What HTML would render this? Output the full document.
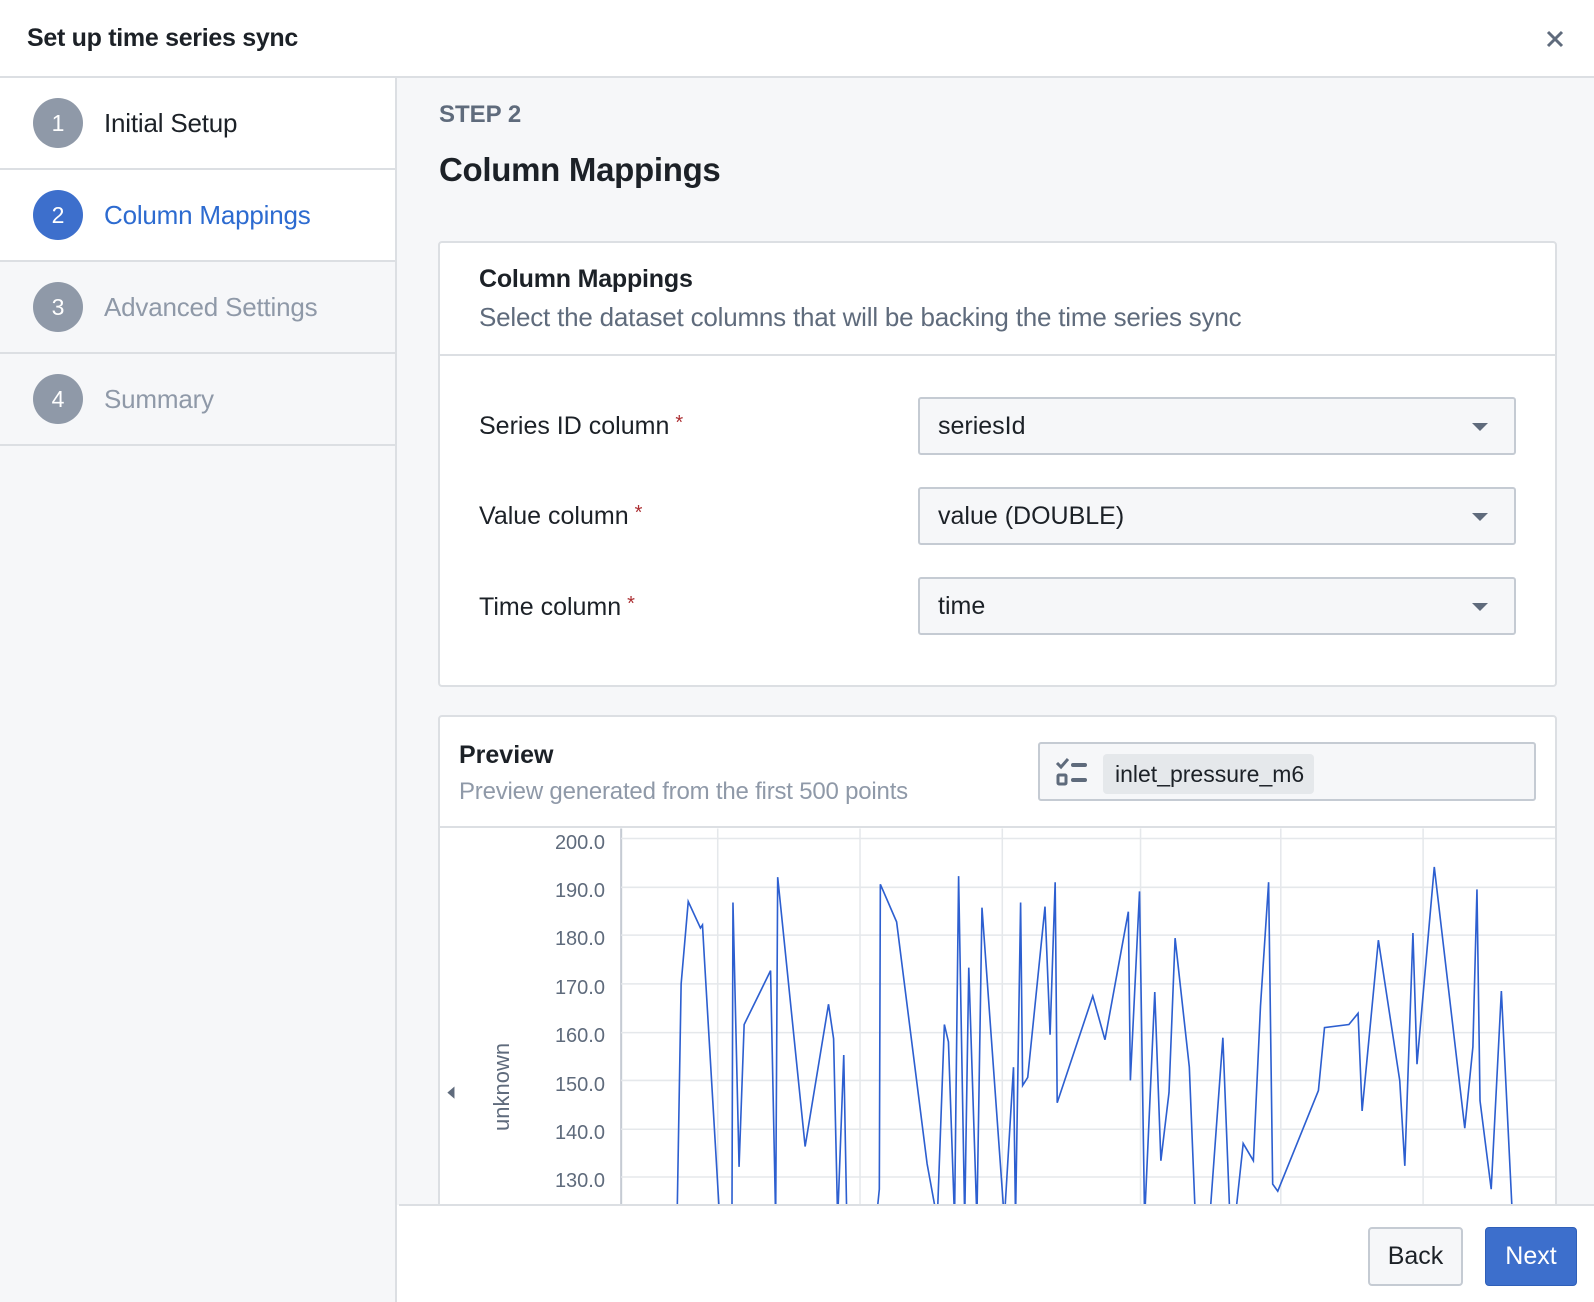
<!DOCTYPE html>
<html><head><meta charset="utf-8"><style>
*{box-sizing:border-box;margin:0;padding:0}
body{width:1594px;height:1302px;overflow:hidden;background:#fff;font-family:"Liberation Sans",sans-serif;color:#1c2127;position:relative}
.abs{position:absolute}
.hdr{left:0;top:0;width:1594px;height:78px;border-bottom:2px solid #dcdfe3;background:#fff}
.side{left:0;top:78px;width:397px;height:1224px;background:#f6f7f9;border-right:2px solid #dcdfe3}
.row{position:absolute;left:0;width:395px;height:92px;border-bottom:2px solid #dcdfe3;display:flex;align-items:center}
.circ{width:50px;height:50px;border-radius:50%;background:#8f99a8;color:#fff;font-size:23px;display:flex;align-items:center;justify-content:center;margin-left:33px;margin-right:21px}
.lbl{font-size:26px;letter-spacing:-0.2px}
.main{left:397px;top:78px;width:1197px;height:1127px;background:#f6f7f9}
.card{background:#fff;border:2px solid #dcdfe3;border-radius:4px}
.sel{position:absolute;left:918px;width:598px;height:58px;background:#f6f7f9;border:2px solid #c5cbd3;border-radius:3px;font-size:25px;padding-left:18px;display:flex;align-items:center}
.sel:after{content:"";position:absolute;right:26px;top:24px;border-left:8px solid transparent;border-right:8px solid transparent;border-top:8px solid #5f6b7c}
.flab{position:absolute;left:479px;font-size:25px}
.flab b{color:#ac2f33;font-weight:normal;font-size:20px;vertical-align:top;margin-left:6px}
.yl{position:absolute;left:540px;width:65px;text-align:right;font-size:20px;color:#5f6b7c}
</style></head><body>
<div class="abs hdr"></div>
<div class="abs" style="left:27px;top:24px;font-size:25px;font-weight:bold;letter-spacing:-0.3px">Set up time series sync</div>
<svg class="abs" style="left:1545px;top:29px" width="20" height="20" viewBox="0 0 20 20"><path d="M3 3L17 17M17 3L3 17" stroke="#5f6b7c" stroke-width="3"/></svg>

<div class="abs side">
 <div class="row" style="top:0;background:#fff"><div class="circ">1</div><div class="lbl">Initial Setup</div></div>
 <div class="row" style="top:92px;background:#fff"><div class="circ" style="background:#3d6fcc">2</div><div class="lbl" style="color:#2d6bd0">Column Mappings</div></div>
 <div class="row" style="top:184px"><div class="circ">3</div><div class="lbl" style="color:#8f99a8">Advanced Settings</div></div>
 <div class="row" style="top:276px"><div class="circ">4</div><div class="lbl" style="color:#8f99a8">Summary</div></div>
</div>

<div class="abs main"></div>
<div class="abs" style="left:439px;top:101px;font-size:24px;font-weight:bold;color:#5f6b7c">STEP 2</div>
<div class="abs" style="left:439px;top:151px;font-size:33px;font-weight:bold;letter-spacing:-0.3px">Column Mappings</div>

<div class="abs card" style="left:438px;top:241px;width:1119px;height:446px"></div>
<div class="abs" style="left:440px;top:354px;width:1115px;height:2px;background:#dcdfe3"></div>
<div class="abs" style="left:479px;top:265px;font-size:25px;font-weight:bold;letter-spacing:-0.2px">Column Mappings</div>
<div class="abs" style="left:479px;top:302px;font-size:26px;color:#5f6b7c;letter-spacing:-0.2px">Select the dataset columns that will be backing the time series sync</div>

<div class="flab" style="top:412px">Series ID column<b>*</b></div>
<div class="sel" style="top:397px">seriesId</div>
<div class="flab" style="top:502px">Value column<b>*</b></div>
<div class="sel" style="top:487px">value (DOUBLE)</div>
<div class="flab" style="top:593px">Time column<b>*</b></div>
<div class="sel" style="top:577px">time</div>

<div class="abs card" style="left:438px;top:715px;width:1119px;height:540px"></div>
<div class="abs" style="left:459px;top:741px;font-size:25px;font-weight:bold">Preview</div>
<div class="abs" style="left:459px;top:778px;font-size:24px;color:#8f99a8;letter-spacing:-0.2px">Preview generated from the first 500 points</div>
<div class="abs" style="left:1038px;top:742px;width:498px;height:59px;background:#f6f7f9;border:2px solid #c5cbd3;border-radius:3px"></div>
<svg class="abs" style="left:1055px;top:758px" width="36" height="30" viewBox="0 0 36 30"><path d="M2 5l4 4 7-8" stroke="#5f6b7c" stroke-width="3" fill="none"/><rect x="3" y="17" width="8" height="9" rx="1" fill="none" stroke="#5f6b7c" stroke-width="3"/><path d="M18 7h12M18 22h12" stroke="#5f6b7c" stroke-width="4" stroke-linecap="round"/></svg>
<div class="abs" style="left:1103px;top:754px;width:211px;height:40px;background:#e5e8eb;border-radius:4px;font-size:23px;padding:7px 0 0 12px">inlet_pressure_m6</div>
<div class="abs" style="left:440px;top:826px;width:1115px;height:2px;background:#dcdfe3"></div>

<svg class="abs" style="left:0;top:0" width="1594" height="1302" viewBox="0 0 1568 1281">
<defs><clipPath id="c"><rect x="459" y="815" width="1071" height="370"/></clipPath></defs>
<g clip-path="url(#c)">
<line x1="458" y1="815" x2="458" y2="1185" stroke="#c5cbd3" stroke-width="2"/>
<line x1="611" y1="815" x2="611" y2="1185" stroke="#c5cbd3" stroke-width="2"/>
<g stroke="#e5e8eb" stroke-width="1.5">
<line x1="611" y1="825" x2="1530" y2="825"/><line x1="611" y1="873" x2="1530" y2="873"/><line x1="611" y1="920" x2="1530" y2="920"/><line x1="611" y1="968" x2="1530" y2="968"/><line x1="611" y1="1016" x2="1530" y2="1016"/><line x1="611" y1="1063" x2="1530" y2="1063"/><line x1="611" y1="1111" x2="1530" y2="1111"/><line x1="611" y1="1158" x2="1530" y2="1158"/>
<line x1="706" y1="815" x2="706" y2="1185"/><line x1="846" y1="815" x2="846" y2="1185"/><line x1="986" y1="815" x2="986" y2="1185"/><line x1="1122" y1="815" x2="1122" y2="1185"/><line x1="1260" y1="815" x2="1260" y2="1185"/><line x1="1400" y1="815" x2="1400" y2="1185"/>
</g>
<polyline fill="none" stroke="#2d5fd0" stroke-width="1.6" points="666,1200 670,968 677,887 689,913 691,910 693,945 708,1200 720,1200 721,888 727,1148 732,1008 758,955 763,1200 765,863 792,1128 815,988 820,1022 824,1200 830,1038 833,1200 862,1200 865,1170 866,870 882,907 912,1145 922,1200 929,1008 933,1025 939,1200 943,862 949,1200 953,952 961,1200 966,893 988,1200 997,1050 999,1200 1004,888 1006,1068 1011,1060 1028,892 1033,1018 1038,868 1040,1085 1075,980 1087,1023 1110,897 1112,1063 1121,877 1126,1200 1136,976 1142,1142 1150,1075 1156,923 1170,1050 1176,1200 1190,1200 1203,1021 1210,1200 1215,1200 1223,1125 1233,1142 1240,990 1248,868 1252,1165 1257,1172 1297,1073 1303,1011 1327,1008 1336,997 1340,1093 1346,1030 1356,925 1377,1063 1382,1147 1390,918 1394,1047 1411,853 1441,1110 1449,1030 1453,875 1456,1083 1467,1170 1477,975 1488,1200"/>
</g>
<path d="M447 1069v12l-7-6z" fill="#5f6b7c"/>
</svg>
<div class="yl" style="top:832px">200.0</div>
<div class="yl" style="top:880px">190.0</div>
<div class="yl" style="top:928px">180.0</div>
<div class="yl" style="top:977px">170.0</div>
<div class="yl" style="top:1025px">160.0</div>
<div class="yl" style="top:1074px">150.0</div>
<div class="yl" style="top:1122px">140.0</div>
<div class="yl" style="top:1170px">130.0</div>
<div class="abs" style="left:460px;top:1076px;width:84px;transform:rotate(-90deg);font-size:22px;color:#5f6b7c;text-align:center">unknown</div>

<div class="abs" style="left:399px;top:1204px;width:1195px;height:98px;background:#fff;border-top:2px solid #dcdfe3"></div>
<div class="abs" style="left:1368px;top:1227px;width:95px;height:59px;background:#f6f7f9;border:2px solid #c5cbd3;border-radius:4px;font-size:25px;display:flex;align-items:center;justify-content:center">Back</div>
<div class="abs" style="left:1485px;top:1227px;width:92px;height:59px;background:#3d6fcc;border:1px solid #2f5fb8;border-radius:4px;font-size:25px;color:#fff;display:flex;align-items:center;justify-content:center">Next</div>
</body></html>
